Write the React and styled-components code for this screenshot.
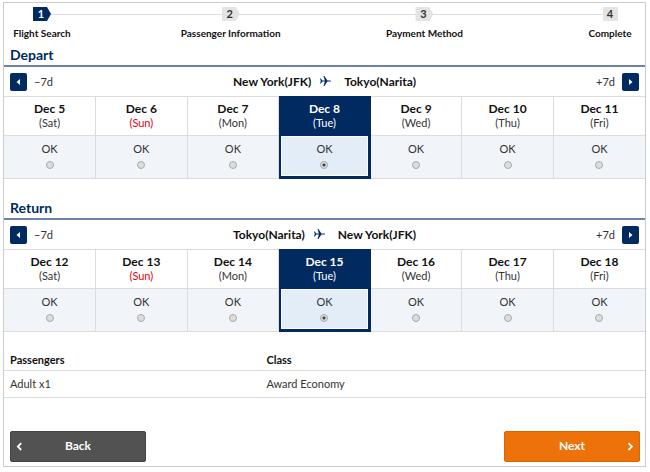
import { Fragment, useState } from "react"
import styled, { createGlobalStyle } from "styled-components"

const navy = "#002a60"
const line = "#dcdcde"

const GlobalStyle = createGlobalStyle`
    * {
        box-sizing: border-box;
    }
    body {
        margin: 0;
        background: #fff;
        color: #333;
        font-family: Lato, "Open Sans", sans-serif;
        font-size: 11px;
        line-height: 14px;
    }
    button, input {
        font: inherit;
        margin: 0;
    }
`
const Page = styled.main`
    margin: 2px 4px 2px 3px;
    border: 1px solid #ccc;
`
const Steps = styled.ol`
    position: relative;
    display: grid;
    grid-template-columns: 58px 111fr 100px 107fr 76px 127fr 44px;
    margin: 0;
    padding: 4px 13px 0 9px;
    list-style: none;

    &::before {
        content: "";
        position: absolute;
        top: 11px;
        left: 42px;
        right: 40px;
        height: 1px;
        background: #ddd;
    }
`
const Step = styled.li`
    position: relative;
    display: flex;
    flex-direction: column;
    align-items: center;
    gap: 5px;
    color: #111;
    font-size: 10px;
    font-weight: bold;
    white-space: nowrap;
`
const Marker = styled.span`
    width: ${({ $last }) => ($last ? 15 : 18)}px;
    height: 14px;
    padding-right: ${({ $last }) => ($last ? 0 : 2)}px;
    background: ${({ $active }) => ($active ? navy : "#e4e4e4")};
    color: ${({ $active }) => ($active ? "#fff" : "#333")};
    clip-path: ${({ $last }) => ($last ? "none" : "polygon(0 0, 14px 0, 100% 50%, 14px 100%, 0 100%)")};
    font-size: 11px;
    text-align: center;
`
const Title = styled.h2`
    margin: 0;
    padding: 0 6px;
    border-bottom: 2px solid #6a83a7;
    color: ${navy};
    font-size: 14px;
    line-height: 20px;
`
const Section = styled.section`
    padding-top: ${({ $first }) => ($first ? 5 : 19)}px;
`
const DayNav = styled.div`
    display: grid;
    grid-template-columns: 1fr auto 1fr;
    align-items: center;
    height: 29px;
    padding: 0 6px;
`
const Shift = styled.div`
    display: flex;
    align-items: center;
    justify-content: ${({ $end }) => ($end ? "flex-end" : "flex-start")};
    gap: 7px;
`
const ShiftButton = styled.button`
    display: flex;
    align-items: center;
    justify-content: center;
    width: 17px;
    height: 18px;
    padding: 0;
    border: 0;
    border-radius: 2px;
    background: ${navy};
`
const Route = styled.div`
    display: flex;
    align-items: center;
    gap: 9px;
    color: #111;
    font-size: 12px;
    font-weight: bold;

    svg {
        margin-right: 4px;
    }
`
const Days = styled.table`
    width: 100%;
    border-collapse: collapse;
    table-layout: fixed;
    text-align: center;
`
const DayHead = styled.th`
    height: 39px;
    padding: 0;
    border: 1px solid ${line};
    border-left-width: ${({ $edge }) => ($edge === "left" ? 0 : 1)}px;
    border-right-width: ${({ $edge }) => ($edge === "right" ? 0 : 1)}px;
    background: ${({ $selected }) => ($selected ? navy : "#fff")};
    border-color: ${({ $selected }) => ($selected ? navy : line)};
    color: ${({ $selected }) => ($selected ? "#fff" : "#111")};
    font-size: 12px;
`
const Weekday = styled.span`
    display: block;
    color: ${({ $sunday, $selected }) => ($selected ? "#fff" : $sunday ? "#e60012" : "#333")};
    font-size: 11px;
    font-weight: normal;
`
const DayCell = styled.td`
    height: 43px;
    padding: 0 0 4px;
    border: 1px solid ${line};
    border-left-width: ${({ $edge }) => ($edge === "left" ? 0 : 1)}px;
    border-right-width: ${({ $edge }) => ($edge === "right" ? 0 : 1)}px;
    background: ${({ $selected }) => ($selected ? "#e3edf8" : "#f1f5fa")};
    box-shadow: ${({ $selected }) => ($selected ? `inset 2px -2px 0 ${navy}, inset -2px 0 0 ${navy}, inset 3px -3px 0 #fff, inset -3px 1px 0 #fff` : "none")};
    border-color: ${({ $selected }) => ($selected ? navy : line)};
`
const Seat = styled.label`
    display: flex;
    flex-direction: column;
    align-items: center;
    gap: 5px;
`
const Radio = styled.input`
    appearance: none;
    width: 8px;
    height: 8px;
    border: 1px solid #aaa;
    border-radius: 50%;
    background: #ddd;

    &:checked {
        background: radial-gradient(circle, #444 0 1px, #ddd 2px);
    }
`
const Summary = styled.table`
    width: 100%;
    margin-top: 18px;
    border-collapse: collapse;
    table-layout: fixed;
    text-align: left;

    th, td {
        height: 27px;
        padding: 0 6px;
        border-bottom: 1px solid ${line};
    }
    th {
        height: 20px;
        color: #111;
    }
    th:first-child {
        width: 40%;
    }
`
const Actions = styled.div`
    display: flex;
    justify-content: space-between;
    padding: 33px 5px 4px 6px;
`
const Action = styled.button`
    display: grid;
    grid-template-columns: 12px 1fr 12px;
    align-items: center;
    width: 136px;
    height: 31px;
    padding: 0 3px;
    border: 1px solid ${({ $primary }) => ($primary ? "#dd6500" : "#444")};
    border-radius: 2px;
    background: ${({ $primary }) => ($primary ? "#ec7209" : "#525252")};
    color: #fff;
    font-size: 12px;
    font-weight: bold;
`
const ActionText = styled.span`
    grid-column: 2;
`

function Plane() {
    return (
        <svg width="11" height="12" viewBox="0 0 11 12" fill={navy} aria-hidden="true">
            <path d="M0 2.5h.8l1.5 1.9h2.6L3.5 0h.9l3 4.4h2.4c.7 0 1.2.2 1.2.6s-.5.6-1.2.6H7.4l-3 4.4h-.9l1.4-4.4H2.3L.8 7.5H0L.8 5z" />
        </svg>
    )
}

function Triangle({ right }) {
    return (
        <svg width="5" height="6" viewBox="0 0 5 6" fill="#fff" aria-hidden="true">
            <path d={right ? "M1 0l3.5 3L1 6z" : "M4 0L.5 3 4 6z"} />
        </svg>
    )
}

function Chevron({ right }) {
    return (
        <svg width="12" height="10" viewBox="0 0 12 10" fill="none" stroke="#fff" strokeWidth="1.8" aria-hidden="true">
            <path d={right ? "M4.5 2.2L7.8 5.6 4.5 9" : "M7.2 2.2L3.9 5.6 7.2 9"} />
        </svg>
    )
}

const steps = ["Flight Search", "Passenger Information", "Payment Method", "Complete"]
const weekdays = ["Sat", "Sun", "Mon", "Tue", "Wed", "Thu", "Fri"]

function Flight({ title, from, to, firstDay, first }) {
    const [selected, setSelected] = useState(3)
    const edge = (i) => (i === 0 ? "left" : i === 6 ? "right" : "none")

    return (
        <Section $first={first}>
            <Title>{title}</Title>
            <DayNav>
                <Shift>
                    <ShiftButton type="button" aria-label="Previous 7 days"><Triangle /></ShiftButton>
                    <span>−7d</span>
                </Shift>
                <Route>
                    <span>{from}</span>
                    <Plane />
                    <span>{to}</span>
                </Route>
                <Shift $end>
                    <span>+7d</span>
                    <ShiftButton type="button" aria-label="Next 7 days"><Triangle right /></ShiftButton>
                </Shift>
            </DayNav>
            <Days>
                <thead>
                    <tr>
                        {weekdays.map((day, i) => (
                            <DayHead key={day} scope="col" $edge={edge(i)} $selected={i === selected}>
                                Dec {firstDay + i}
                                <Weekday $sunday={day === "Sun"} $selected={i === selected}>({day})</Weekday>
                            </DayHead>
                        ))}
                    </tr>
                </thead>
                <tbody>
                    <tr>
                        {weekdays.map((day, i) => (
                            <DayCell key={day} $edge={edge(i)} $selected={i === selected}>
                                <Seat>
                                    OK
                                    <Radio
                                        type="radio"
                                        name={title}
                                        checked={i === selected}
                                        onChange={() => setSelected(i)}
                                    />
                                </Seat>
                            </DayCell>
                        ))}
                    </tr>
                </tbody>
            </Days>
        </Section>
    )
}

export default function App() {
    return (
        <>
            <GlobalStyle />
            <Page>
                <Steps>
                    {steps.map((step, i) => (
                        <Fragment key={step}>
                            {i > 0 && <li aria-hidden="true" />}
                            <Step>
                                <Marker $active={i === 0} $last={i === 3}>{i + 1}</Marker>
                                {step}
                            </Step>
                        </Fragment>
                    ))}
                </Steps>
                <Flight first title="Depart" from="New York(JFK)" to="Tokyo(Narita)" firstDay={5} />
                <Flight title="Return" from="Tokyo(Narita)" to="New York(JFK)" firstDay={12} />
                <Summary>
                    <thead>
                        <tr>
                            <th scope="col">Passengers</th>
                            <th scope="col">Class</th>
                        </tr>
                    </thead>
                    <tbody>
                        <tr>
                            <td>Adult x1</td>
                            <td>Award Economy</td>
                        </tr>
                    </tbody>
                </Summary>
                <Actions>
                    <Action type="button">
                        <Chevron />
                        <ActionText>Back</ActionText>
                    </Action>
                    <Action type="button" $primary>
                        <ActionText>Next</ActionText>
                        <Chevron right />
                    </Action>
                </Actions>
            </Page>
        </>
    )
}
